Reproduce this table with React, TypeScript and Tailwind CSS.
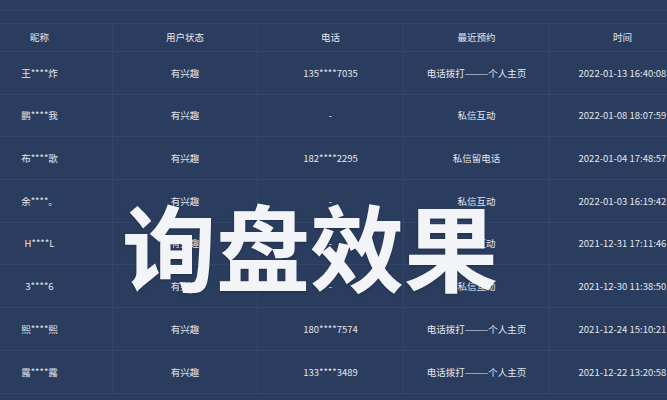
import React from "react";

const rows = [
  ["王****炸", "有兴趣", "135****7035", "电话拨打———个人主页", "2022-01-13 16:40:08"],
  ["鹏****我", "有兴趣", "-", "私信互动", "2022-01-08 18:07:59"],
  ["布****歌", "有兴趣", "182****2295", "私信留电话", "2022-01-04 17:48:57"],
  ["余****。", "有兴趣", "-", "私信互动", "2022-01-03 16:19:42"],
  ["H****L", "有兴趣", "-", "私信互动", "2021-12-31 17:11:46"],
  ["3****6", "有兴趣", "-", "私信互动", "2021-12-30 11:38:50"],
  ["熙****熙", "有兴趣", "180****7574", "电话拨打———个人主页", "2021-12-24 15:10:21"],
  ["露****露", "有兴趣", "133****3489", "电话拨打———个人主页", "2021-12-22 13:20:58"],
];

const headers = ["昵称", "用户状态", "电话", "最近预约", "时间"];

export default function App() {
  return (
    <div
      className="relative w-[667px] h-[400px] overflow-hidden bg-[#2b3d5f] text-[#e3e7ee]"
      style={{ fontFamily: '"Noto Sans CJK SC", "Noto Sans", sans-serif' }}
    >
      <div className="h-[11px] border-b border-[#34476b]"></div>
      <div className="h-[13px] border-b border-[#34476b]"></div>

      <div className="ml-[-33px] w-[740px]">
        <div className="grid grid-cols-[146px_145px_146px_146px_146px] h-[28px] border-b border-[#34476b] text-[9.5px]">
          {headers.map((h) => (
            <div key={h} className="flex items-center justify-center border-r border-[#34476b]">
              {h}
            </div>
          ))}
        </div>
        {rows.map((r, i) => (
          <div
            key={i}
            className="grid grid-cols-[146px_145px_146px_146px_146px] h-[42.7px] border-b border-[#34476b] text-[9.5px]"
          >
            {r.map((c, j) => (
              <div key={j} className="flex items-center justify-center border-r border-[#34476b] whitespace-nowrap">
                {c}
              </div>
            ))}
          </div>
        ))}
      </div>

      <div className="absolute left-[122px] top-[197px] text-[94px] leading-none font-bold text-[#f3f4f8] whitespace-nowrap [text-shadow:0_1px_3px_rgba(0,0,0,0.25)]">
        询盘效果
      </div>
    </div>
  );
}
